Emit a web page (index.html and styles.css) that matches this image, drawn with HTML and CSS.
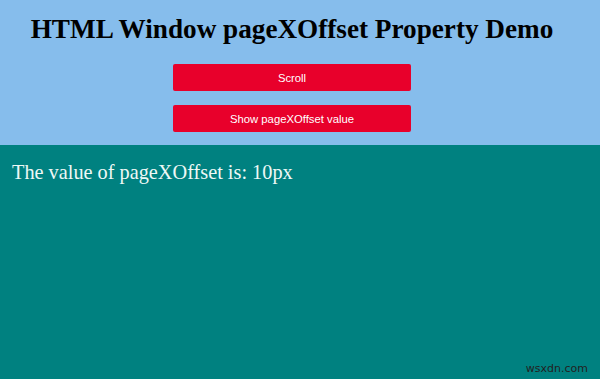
FILE: index.html
```html
<!DOCTYPE html>
<html>
<head>
<meta charset="utf-8">
<link rel="stylesheet" href="styles.css">
</head>
<body>
<header class="top">
  <h1 class="title">HTML Window pageXOffset Property Demo</h1>
  <div class="actions">
    <button class="btn">Scroll</button>
    <button class="btn">Show pageXOffset value</button>
  </div>
</header>
<main class="result">
  <p class="value">The value of pageXOffset is: 10px</p>
  <span class="mark">wsxdn.com</span>
</main>
</body>
</html>
```
FILE: styles.css
```css
html, body {
  margin: 0;
  padding: 0;
  width: 600px;
  height: 379px;
  overflow: hidden;
}
body {
  display: flex;
  flex-direction: column;
  font-family: "Liberation Serif", serif;
}
.top {
  background: #86bdec;
  height: 145px;
  box-sizing: border-box;
  padding: 13px 16px 0 0;
  display: flex;
  flex-direction: column;
  align-items: center;
}
.title {
  margin: 0;
  font-size: 27.2px;
  font-weight: bold;
  color: #000;
  line-height: 32px;
}
.actions {
  margin-top: 19px;
  display: flex;
  flex-direction: column;
  gap: 14px;
}
.btn {
  width: 238px;
  height: 27px;
  border: none;
  border-radius: 2px;
  background: #e8002b;
  color: #fff;
  font-family: "Liberation Sans", Arial, sans-serif;
  font-size: 11.3px;
  padding: 0;
}
.result {
  flex: 1;
  background: #008180;
  position: relative;
  padding: 15px 12px 0;
}
.value {
  margin: 0;
  font-size: 20.3px;
  color: #eef8f6;
  line-height: 24px;
}
.mark {
  position: absolute;
  right: 12px;
  bottom: 4px;
  font-family: "DejaVu Sans", sans-serif;
  font-size: 11px;
  color: #222;
}
```
